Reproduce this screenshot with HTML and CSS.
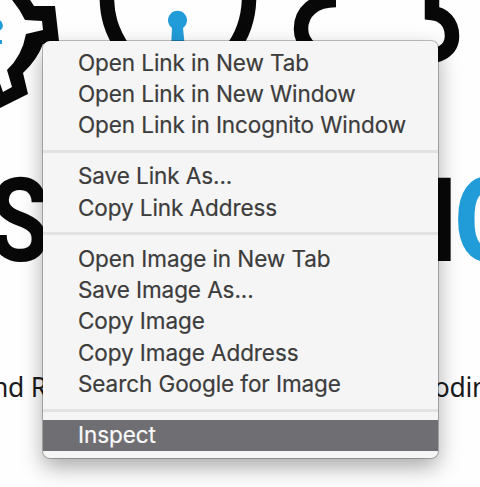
FILE: index.html
```html
<!DOCTYPE html>
<html lang="en">
<head>
<meta charset="utf-8">
<title>Context menu</title>
<link rel="stylesheet" href="styles.css">
</head>
<body>
<main class="page">
  <svg class="artwork" viewBox="0 0 480 150" aria-hidden="true">
    <path class="gear" fill-rule="evenodd" d="M-10 -10 L23 -10 Q29 -2 34 6 L55 6 L59 41 L43 44 Q37 60 23 73 L28 94 L-2 109 L-10 109 Z M-10 -10 L3 -10 Q18 5 25 20 L42 21 L43 30 L26 34 Q22 56 7 70 L12 87 L3 92 L-2 78 L-10 78 Z"/>
    <g class="outline">
      <path d="M107 -8 C106 14 111 31 124 50 M249 -8 C250 16 244 34 231 51"/>
      <path d="M336 0 C314 0 301 12 301 29 C301 44 315 56 335 56 L420 56 C438 58 452 51 452 36 C452 22 443 14 432 13 L432 -8"/>
    </g>
    <path class="accent" d="M171 48 L172 28 A9.5 9.5 0 1 1 183 28 L185 48 Z"/>
    <path class="accent-line" d="M-4 21 C2 22 3 29 -4 29 M-4 42 L2 42"/>
  </svg>
  <div class="headline">
    <span class="word">S</span>
    <span class="word-end">I<b>O</b></span>
  </div>
  <p class="caption"><span>nd R</span><span class="caption-end">oding</span></p>
</main>
<nav class="menu">
  <ul class="group">
    <li class="item">Open Link in New Tab</li>
    <li class="item">Open Link in New Window</li>
    <li class="item">Open Link in Incognito Window</li>
  </ul>
  <ul class="group">
    <li class="item">Save Link As...</li>
    <li class="item">Copy Link Address</li>
  </ul>
  <ul class="group">
    <li class="item">Open Image in New Tab</li>
    <li class="item">Save Image As...</li>
    <li class="item">Copy Image</li>
    <li class="item">Copy Image Address</li>
    <li class="item">Search Google for Image</li>
  </ul>
  <ul class="group">
    <li class="item selected">Inspect</li>
  </ul>
</nav>
</body>
</html>
```
FILE: styles.css
```css
* { box-sizing: border-box; }
body {
  margin: 0;
  width: 480px;
  height: 487px;
  overflow: hidden;
  position: relative;
  background: #fefefe;
  font-family: Inter, "Liberation Sans", sans-serif;
}
.page { display: flex; flex-direction: column; height: 487px; overflow: hidden; }
.artwork { display: block; width: 480px; height: 150px; flex: none; }
.gear { fill: #080808; }
.outline path { fill: none; stroke: #080808; stroke-width: 14.5; }
.accent { fill: #219cd8; }
.accent-line { fill: none; stroke: #219cd8; stroke-width: 4; }
.headline {
  display: flex;
  justify-content: space-between;
  height: 140px;
  flex: none;
  font: bold 117px/142px Roboto, sans-serif;
  color: #080808;
}
.word {
  margin-left: -11px;
  transform: scaleX(.84);
  transform-origin: left;
}
.word-end { margin-right: -56px; white-space: nowrap; }
.word-end b {
  display: inline-block;
  margin-left: -4px;
  color: #219cd8;
  transform: scaleX(.8);
  transform-origin: left;
}
.caption {
  display: flex;
  justify-content: space-between;
  margin: 77px 0 0;
  font: 26.5px/40px "Noto Sans", sans-serif;
  letter-spacing: -.3px;
  color: #1b1b1d;
}
.caption span { margin-left: -8px; }
.caption .caption-end { margin-right: -24px; }
.menu {
  position: absolute;
  left: 43px;
  top: 41px;
  width: 395px;
  height: 417px;
  padding-top: 6.5px;
  background: #f5f5f5;
  border-radius: 7px;
  box-shadow: 0 0 0 1px rgba(0, 0, 0, .24), 0 9px 22px rgba(0, 0, 0, .34);
}
.group { list-style: none; margin: 0; padding: 0; }
.group + .group::before {
  content: "";
  display: block;
  height: 3px;
  margin: 8.5px 0;
  background: #e2e2e2;
}
.item {
  height: 31.25px;
  padding-left: 35px;
  font-size: 22.5px;
  line-height: 30.5px;
  letter-spacing: -.08px;
  color: #3c3c3c;
  -webkit-text-stroke: .2px currentColor;
  white-space: nowrap;
}
.selected { background: #6f6e72; color: #fafafa; }
```
